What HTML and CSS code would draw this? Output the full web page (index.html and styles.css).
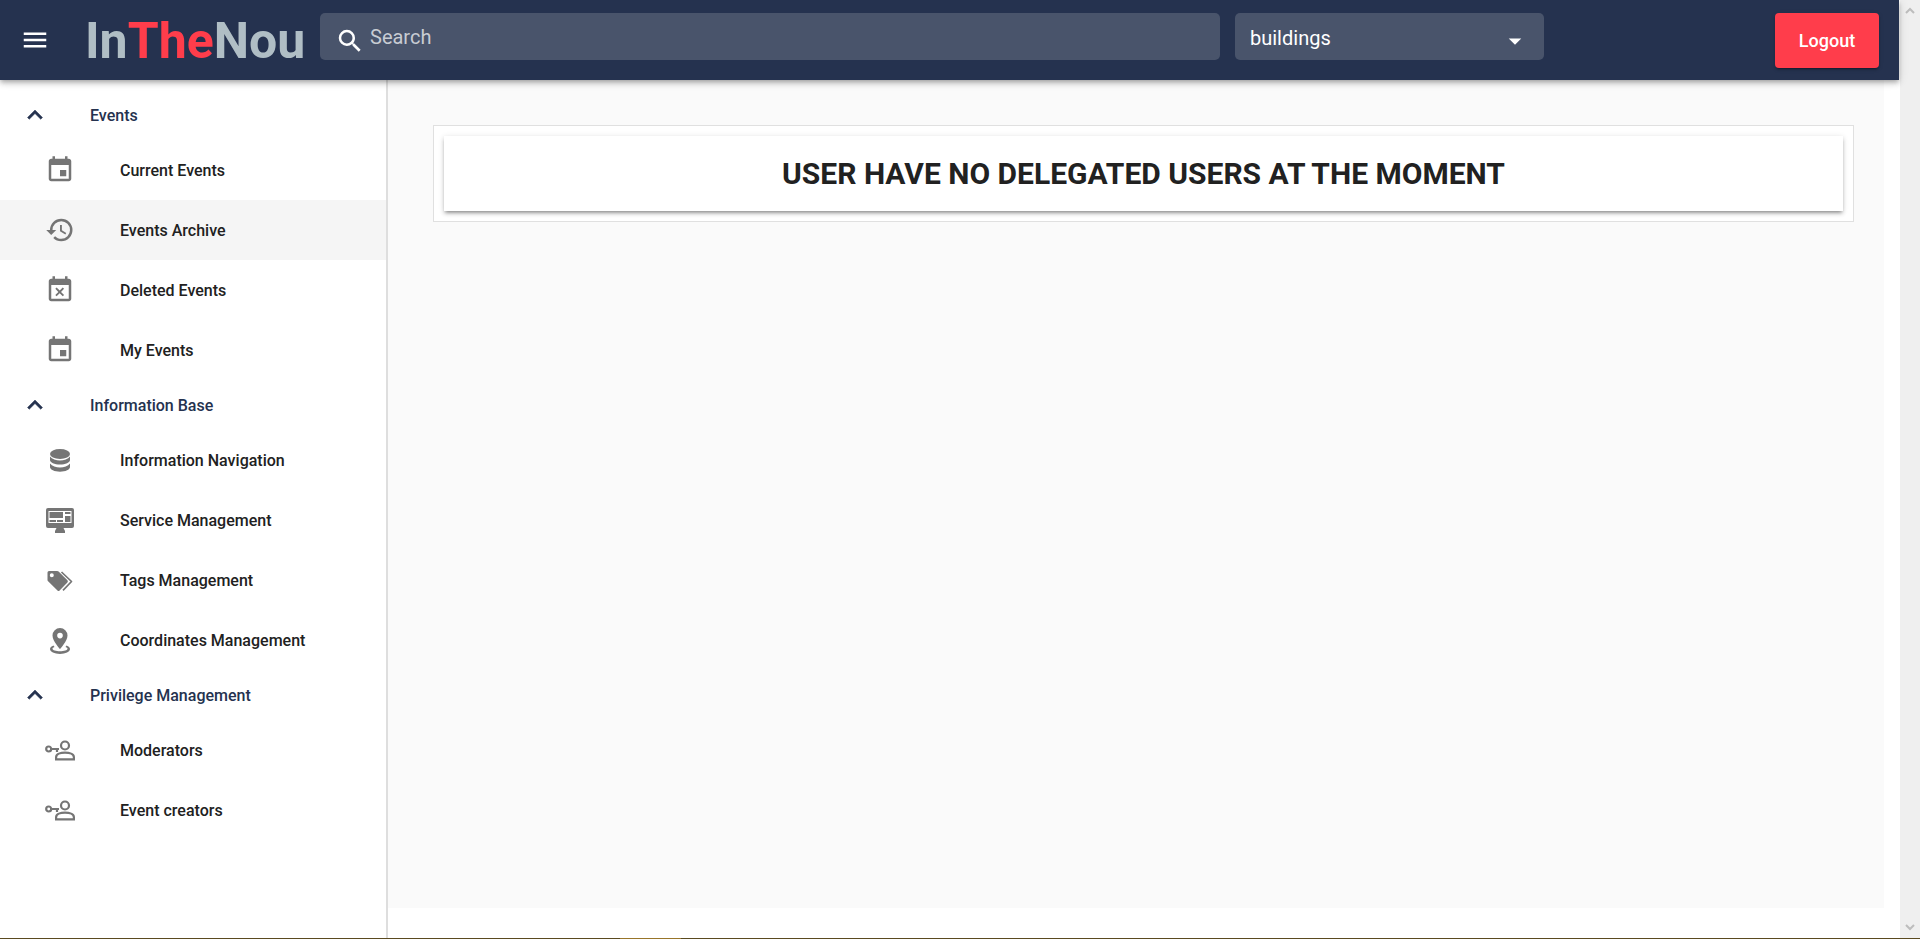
FILE: index.html
```html
<!DOCTYPE html>
<html lang="en">
<head>
<meta charset="utf-8">
<title>InTheNou</title>
<link rel="stylesheet" href="styles.css">
</head>
<body>
<svg class="sprite" aria-hidden="true">
  <symbol id="chevron" viewBox="0 0 24 24"><path stroke="currentColor" stroke-width=".4" d="M7.41 15.41 12 10.83l4.59 4.58L18 14l-6-6-6 6z"/></symbol>
  <symbol id="event" viewBox="0 0 24 24"><path d="M17 12h-5v5h5v-5zM16 1v2H8V1H6v2H5c-1.11 0-1.99.9-1.99 2L3 19c0 1.1.89 2 2 2h14c1.1 0 2-.9 2-2V5c0-1.1-.9-2-2-2h-1V1h-2zm3 18H5V8h14v11z"/></symbol>
  <symbol id="history" viewBox="0 0 24 24"><path d="M13.5 8H12v5l4.28 2.54.72-1.21-3.5-2.08V8M13 3a9 9 0 0 0-9 9H1l3.96 4.03L9 12H6a7 7 0 1 1 7 7c-1.93 0-3.68-.79-4.94-2.06l-1.42 1.42C8.27 20 10.5 21 13 21a9 9 0 0 0 0-18"/></symbol>
  <symbol id="event-busy" viewBox="0 0 24 24"><path d="M9.31 17l2.44-2.44L14.19 17l1.06-1.06-2.44-2.44 2.44-2.44L14.19 10l-2.44 2.44L9.31 10l-1.06 1.06 2.44 2.44-2.44 2.44L9.31 17zM19 3h-1V1h-2v2H8V1H6v2H5c-1.11 0-1.99.9-1.99 2L3 19c0 1.1.89 2 2 2h14c1.1 0 2-.9 2-2V5c0-1.1-.9-2-2-2zm0 16H5V8h14v11z"/></symbol>
  <symbol id="database" viewBox="0 0 30 30"><ellipse cx="15" cy="9" rx="10" ry="5"/><path d="M5 11.500c2 2.600 6 4 10 4s8-1.400 10-4V15c0 2.500-4.500 4.500-10 4.500S5 17.500 5 15zM5 18.500c2 2.600 6 4 10 4s8-1.400 10-4v3.500c0 2.700-4.500 4.700-10 4.700S5 24.700 5 22z"/></symbol>
  <symbol id="monitor" viewBox="0 0 30 30"><path fill-rule="evenodd" d="M3 3h24a2 2 0 0 1 2 2v16a2 2 0 0 1-2 2h-8.500l1.500 3v2H10v-2l1.500-3H3a2 2 0 0 1-2-2V5a2 2 0 0 1 2-2zM3.500 6v12h23V6z"/><path d="M4.500 7H18v6H4.500zM4.500 15H11v2H4.500zM12 15h6v2h-6zM20 7h5.500v2H20zM20 11h5.500v6H20z"/></symbol>
  <symbol id="tags" viewBox="0 0 30 30"><path fill-rule="evenodd" d="M4 6h8.200a2 2 0 0 1 1.400.6l8.800 8.700a1.500 1.500 0 0 1 0 2.100l-7.800 8a1.500 1.500 0 0 1-2.100 0L3.100 16.300a2 2 0 0 1-.6-1.400V7.500A1.500 1.500 0 0 1 4 6zM6.800 8.200a2 2 0 1 0 0 4 2 2 0 0 0 0-4z"/><path fill="none" stroke="currentColor" stroke-width="1.700" stroke-linejoin="round" d="M16.500 7l10 9.500-8.500 8.800"/></symbol>
  <symbol id="pin" viewBox="0 0 30 30"><path fill-rule="evenodd" d="M15 3a7.500 7.500 0 0 1 7.500 7.500C22.500 16 15 24 15 24S7.500 16 7.500 10.500A7.500 7.500 0 0 1 15 3zm0 4.800a2.800 2.800 0 1 0 0 5.600 2.800 2.800 0 0 0 0-5.600z"/><path d="M8.500 20.500l1 1.600c-1.500.5-2 1.100-2 1.700 0 1.400 3.500 2.500 7.500 2.500s7.500-1.100 7.500-2.500c0-.6-.5-1.200-2-1.700l1-1.600c2.200.9 3.500 2.100 3.500 3.500 0 2.800-4.500 4.900-10 4.900S5 26.800 5 24c0-1.400 1.300-2.600 3.500-3.500z"/></symbol>
  <symbol id="person-key" viewBox="0 0 30 30"><g fill="none" stroke="currentColor" stroke-width="2.200"><circle cx="20" cy="10.500" r="4"/><path d="M11.100 24.400v-2.200c0-3 4.500-4.500 8.900-4.500s8.900 1.500 8.900 4.500v2.200z"/><circle cx="3.700" cy="14" r="2.500"/><path d="M6 14h8M12 14v3"/></g></symbol>
</svg>

<div class="shell">
  <div class="app">
    <header class="topbar">
      <button class="menu" type="button" aria-label="Menu">
        <svg viewBox="0 0 24 24"><path d="M3 18h18v-2H3v2zm0-5h18v-2H3v2zm0-7v2h18V6H3z"/></svg>
      </button>
      <div class="logo">In<span class="logo-mid">The</span>Nou</div>
      <label class="search">
        <svg viewBox="0 0 24 24"><path d="M9.500 3A6.500 6.500 0 0 1 16 9.500c0 1.610-.590 3.090-1.560 4.230l.270.270h.790l5 5-1.500 1.500-5-5v-.790l-.270-.270A6.516 6.516 0 0 1 9.500 16a6.500 6.500 0 0 1 0-13m0 2a4.500 4.500 0 1 0 0 9 4.500 4.500 0 0 0 0-9z"/></svg>
        <input type="text" placeholder="Search" aria-label="Search">
      </label>
      <div class="picker">
        <select aria-label="Category"><option>buildings</option></select>
        <svg viewBox="0 0 24 24"><path d="M7 10l5 5 5-5z"/></svg>
      </div>
      <button class="logout" type="button">Logout</button>
    </header>

    <div class="body">
      <nav class="sidebar">
        <button class="group" type="button"><svg><use href="#chevron"/></svg>Events</button>
        <a class="item" href="#"><svg><use href="#event"/></svg>Current Events</a>
        <a class="item active" href="#"><svg><use href="#history"/></svg>Events Archive</a>
        <a class="item" href="#"><svg><use href="#event-busy"/></svg>Deleted Events</a>
        <a class="item" href="#"><svg><use href="#event"/></svg>My Events</a>
        <button class="group" type="button"><svg><use href="#chevron"/></svg>Information Base</button>
        <a class="item" href="#"><svg><use href="#database"/></svg>Information Navigation</a>
        <a class="item" href="#"><svg><use href="#monitor"/></svg>Service Management</a>
        <a class="item" href="#"><svg><use href="#tags"/></svg>Tags Management</a>
        <a class="item" href="#"><svg><use href="#pin"/></svg>Coordinates Management</a>
        <button class="group" type="button"><svg><use href="#chevron"/></svg>Privilege Management</button>
        <a class="item" href="#"><svg><use href="#person-key"/></svg>Moderators</a>
        <a class="item" href="#"><svg><use href="#person-key"/></svg>Event creators</a>
      </nav>
      <main class="content">
        <section class="panel">
          <h1 class="notice">USER HAVE NO DELEGATED USERS AT THE MOMENT</h1>
        </section>
      </main>
    </div>
  </div>
  <div class="scrollbar" aria-hidden="true">
    <svg viewBox="0 0 10 7"><path d="M1 6l4-4 4 4"/></svg>
    <svg viewBox="0 0 10 7"><path d="M1 1l4 4 4-4"/></svg>
  </div>
</div>
<footer class="edge"><span class="edge-mark"></span></footer>
</body>
</html>
```
FILE: styles.css
```css
* { box-sizing: border-box; }

body {
  margin: 0;
  min-height: 100vh;
  display: flex;
  flex-direction: column;
  background: #fff;
  color: #212121;
  font-family: Roboto, "Liberation Sans", sans-serif;
  font-size: 16px;
}

button, input, select {
  font: inherit;
  color: inherit;
  border: 0;
  background: none;
  padding: 0;
}

svg { display: block; fill: currentColor; }
.sprite { display: none; }

.shell { flex: 1; display: flex; }
.app { flex: 1; min-width: 0; display: flex; flex-direction: column; }

.topbar {
  position: relative;
  z-index: 1;
  height: 80px;
  margin-right: 1px;
  padding: 0 20px;
  display: flex;
  align-items: flex-start;
  background: #25324f;
  color: #fff;
  box-shadow: 0 2px 4px -1px rgba(0,0,0,.2), 0 4px 5px rgba(0,0,0,.14), 0 1px 10px rgba(0,0,0,.12);
}
.menu { align-self: center; width: 30px; height: 30px; }
.menu svg { width: 30px; height: 30px; }
.logo {
  flex: none;
  width: 235px;
  margin-left: 35px;
  color: #b0bec5;
  font-size: 50px;
  font-weight: 700;
  line-height: 82px;
}
.logo-mid { color: #ff3d4b; }

.search, .picker {
  height: 47px;
  margin-top: 13px;
  display: flex;
  border-radius: 5px;
  background: #49546b;
  font-size: 20px;
}
.search { flex: 1; align-items: center; padding-left: 15px; gap: 5px; }
.search svg { width: 30px; height: 30px; margin-top: 8px; }
.search input { flex: 1; min-width: 0; height: 45px; outline: 0; }
.search input::placeholder { color: #c8ccd3; opacity: 1; }
.picker { flex: none; width: 309px; position: relative; margin-left: 15px; }
.picker select { flex: 1; appearance: none; padding: 2px 0 0 15px; }
.picker svg { position: absolute; right: 14px; top: 13px; width: 30px; height: 30px; pointer-events: none; }
.logout {
  flex: none;
  width: 104px;
  height: 55px;
  margin: 13px 0 0 231px;
  border-radius: 4px;
  background: #ff3d4b;
  font-size: 18px;
  font-weight: 500;
  box-shadow: 0 3px 1px -2px rgba(0,0,0,.2), 0 2px 2px rgba(0,0,0,.14), 0 1px 5px rgba(0,0,0,.12);
}

.body { flex: 1; display: flex; }
.sidebar {
  flex: none;
  width: 388px;
  padding-top: 10px;
  border-right: 2px solid #dedede;
  font-weight: 500;
}
.group, .item { display: flex; align-items: center; width: 100%; text-align: left; }
.group { height: 50px; padding-left: 20px; gap: 40px; color: #25324f; font-weight: 500; }
.group svg { width: 30px; height: 30px; }
.item { height: 60px; padding-left: 45px; gap: 45px; color: #212121; text-decoration: none; }
.item svg { width: 30px; height: 30px; color: #757575; }
.active { background: #f5f5f5; }

.content {
  flex: 1;
  margin: 0 16px 30px 0;
  padding: 45px 30px 45px 45px;
  background: #fafafa;
}
.panel { padding: 10px; border: 1px solid #e0e0e0; background: #fff; }
.notice {
  margin: 0;
  padding: 16px;
  font-size: 30px;
  line-height: 43px;
  text-align: center;
  box-shadow: 0 3px 3px -2px rgba(0,0,0,.3), 0 3px 4px rgba(0,0,0,.16), 0 1px 6px rgba(0,0,0,.12);
}

.scrollbar {
  flex: none;
  width: 20px;
  padding: 7px 5px;
  display: flex;
  flex-direction: column;
  justify-content: space-between;
  background: #efefef;
}
.scrollbar svg { width: 10px; height: 7px; fill: none; stroke: #bdbdbd; stroke-width: 2; }

.edge { height: 1px; display: flex; background: #5a4a20; }
.edge-mark { width: 61px; margin-left: 620px; background: #98752a; }
```
